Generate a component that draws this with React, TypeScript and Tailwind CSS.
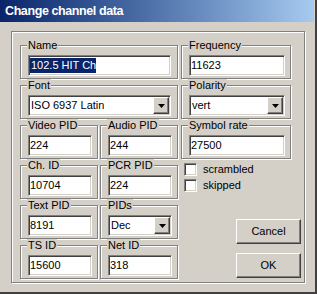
import React, { FC, ReactNode } from 'react';

const sunken =
    'bg-white border border-t-[#808080] border-l-[#808080] border-b-white border-r-white shadow-[inset_1px_1px_0_#404040,inset_-1px_-1px_0_#d4d0c8]';

const raised =
    'border border-t-white border-l-white border-r-[#404040] border-b-[#404040] shadow-[inset_-1px_-1px_0_#808080]';

interface GroupProps {
    label: string;
    className: string;
    children: ReactNode;
}
const Group: FC<GroupProps> = ({ label, className, children }) => (
    <div className={'relative pt-[6px] ' + className}>
        <span className="absolute top-0 left-[7px] bg-[#d4d0c8] px-[1px] leading-[13px]">{label}</span>
        <div className="h-[34px] border border-[#808080] shadow-[inset_1px_1px_0_#fff,1px_1px_0_#fff] pt-[9px] pl-[7px]">
            {children}
        </div>
    </div>
);

interface EditProps {
    value: string;
    className: string;
    selected?: boolean;
}
const Edit: FC<EditProps> = ({ value, className, selected }) => (
    <div className={'h-[21px] flex items-center pl-[1px] ' + sunken + ' ' + className}>
        {selected ? <span className="bg-[#0a246a] text-white leading-[15px] pl-[1px]">{value}</span> : value}
    </div>
);

const Arrow = () => (
    <svg width="7" height="4" viewBox="0 0 7 4">
        <path d="M0 0h7L3.5 4z" fill="#000" />
    </svg>
);

const Combo: FC<EditProps> = ({ value, className }) => (
    <div className={'h-[21px] flex items-center pl-[2px] ' + sunken + ' ' + className}>
        <span className="flex-1">{value}</span>
        <div className={'w-[16px] h-[17px] mr-[1px] bg-[#d4d0c8] flex items-center justify-center ' + raised}>
            <Arrow />
        </div>
    </div>
);

const Check: FC<{ label: string }> = ({ label }) => (
    <div className="flex items-center gap-[6px] h-[13px]">
        <div className={'w-[13px] h-[13px] ' + sunken} />
        <span>{label}</span>
    </div>
);

const Button: FC<{ label: string }> = ({ label }) => (
    <div className={'w-[65px] h-[25px] flex items-center justify-center bg-[#d4d0c8] ' + raised}>{label}</div>
);

const App = () => {
    return (
        <div className="w-[317px] h-[294px] bg-[#d4d0c8] text-[11px] text-black font-['Liberation_Sans',Arial,sans-serif] border-r-2 border-b-2 border-r-[#404040] border-b-[#404040] overflow-hidden">
            <div className="h-[22px] w-[314px] bg-gradient-to-r from-[#0a246a] to-[#a6caf0] flex items-center pl-[5px] text-white font-bold text-[12.5px] tracking-[-0.4px]">
                Change channel data
            </div>

            <div className="ml-[11px] mt-[9px] w-[294px] h-[252px] border border-[#808080] shadow-[inset_1px_1px_0_#fff,1px_1px_0_#fff] pt-[7px] pl-[8px]">
                <div className="flex gap-[3px]">
                    <Group label="Name" className="w-[158px]">
                        <Edit value="102.5 HIT Ch" className="w-[143px]" selected />
                    </Group>
                    <Group label="Frequency" className="w-[110px]">
                        <Edit value="11623" className="w-[96px]" />
                    </Group>
                </div>
                <div className="flex gap-[3px]">
                    <Group label="Font" className="w-[158px]">
                        <Combo value="ISO 6937 Latin" className="w-[143px]" />
                    </Group>
                    <Group label="Polarity" className="w-[110px]">
                        <Combo value="vert" className="w-[96px]" />
                    </Group>
                </div>
                <div className="flex gap-[3px]">
                    <div className="flex gap-[2px]">
                        <Group label="Video PID" className="w-[78px]">
                            <Edit value="224" className="w-[64px]" />
                        </Group>
                        <Group label="Audio PID" className="w-[78px]">
                            <Edit value="244" className="w-[64px]" />
                        </Group>
                    </div>
                    <Group label="Symbol rate" className="w-[110px]">
                        <Edit value="27500" className="w-[96px]" />
                    </Group>
                </div>
                <div className="flex gap-[3px]">
                    <div className="flex flex-col">
                        <div className="flex gap-[2px]">
                            <Group label="Ch. ID" className="w-[78px]">
                                <Edit value="10704" className="w-[64px]" />
                            </Group>
                            <Group label="PCR PID" className="w-[78px]">
                                <Edit value="224" className="w-[64px]" />
                            </Group>
                        </div>
                        <div className="flex gap-[2px]">
                            <Group label="Text PID" className="w-[78px]">
                                <Edit value="8191" className="w-[64px]" />
                            </Group>
                            <Group label="PIDs" className="w-[78px]">
                                <Combo value="Dec" className="w-[64px]" />
                            </Group>
                        </div>
                        <div className="flex gap-[2px]">
                            <Group label="TS ID" className="w-[78px]">
                                <Edit value="15600" className="w-[64px]" />
                            </Group>
                            <Group label="Net ID" className="w-[78px]">
                                <Edit value="318" className="w-[64px]" />
                            </Group>
                        </div>
                    </div>
                    <div className="flex flex-col w-[120px] pb-[1px]">
                        <div className="flex flex-col gap-[3px] pt-[4px] pl-[3px]">
                            <Check label="scrambled" />
                            <Check label="skipped" />
                        </div>
                        <div className="flex-1" />
                        <div className="flex flex-col gap-[9px] pl-[55px]">
                            <Button label="Cancel" />
                            <Button label="OK" />
                        </div>
                    </div>
                </div>
            </div>
        </div>
    );
};

export default App;
